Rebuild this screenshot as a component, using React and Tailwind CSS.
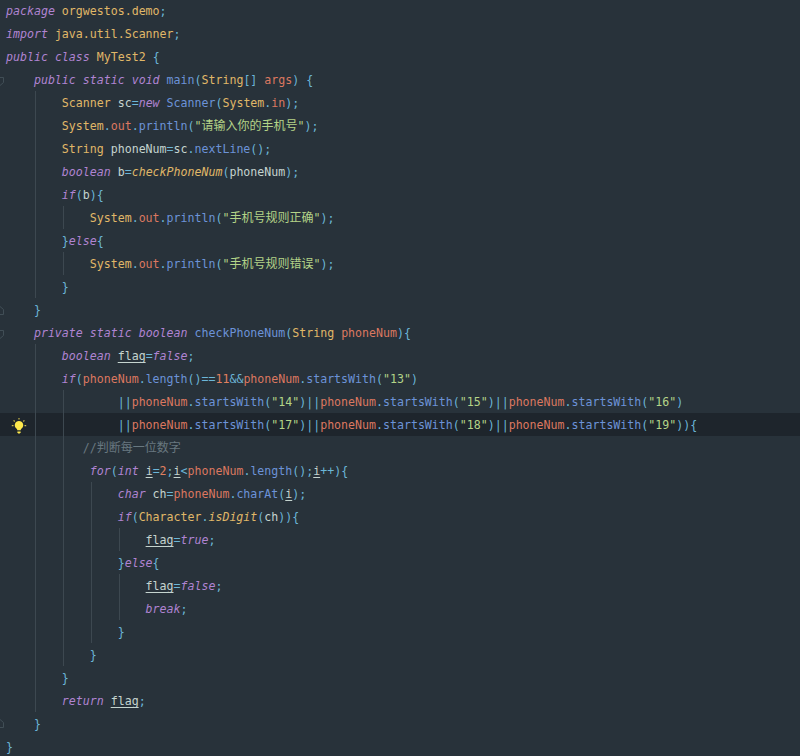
const fam = "font-['DejaVu_Sans_Mono','Noto_Sans_CJK_SC',monospace]";
const K = "italic text-[#b084d2]";
const Y = "text-[#e0b868]";
const W = "text-[#c5d4cf]";
const B = "text-[#6c93d8]";
const C = "text-[#6cb6d8]";
const R = "text-[#dc7860]";
const G = "text-[#b4d488]";
const N = "text-[#e08060]";
const I = "italic text-[#e0b868]";
const U = "text-[#c5d4cf] underline underline-offset-2";
const Z = "text-[#687880]";
const P = "text-[#dc7860]";

const ph = [P, "phoneNum"];
const sw = (n, close = ")") => [[B, "startsWith"], [C, "("], [G, `"${n}"`], [C, close]];

const lines = [
  [[K, "package"], [W, " "], [Y, "orgwestos.demo"], [C, ";"]],
  [[K, "import"], [W, " "], [Y, "java.util.Scanner"], [C, ";"]],
  [[K, "public"], [W, " "], [K, "class"], [W, " "], [Y, "MyTest2"], [W, " "], [C, "{"]],
  [[W, "    "], [K, "public"], [W, " "], [K, "static"], [W, " "], [K, "void"], [W, " "], [B, "main"], [C, "("], [Y, "String"], [C, "[]"], [W, " "], [R, "args"], [C, ")"], [W, " "], [C, "{"]],
  [[W, "        "], [Y, "Scanner"], [W, " sc"], [C, "="], [K, "new"], [W, " "], [B, "Scanner"], [C, "("], [Y, "System"], [C, "."], [R, "in"], [C, ");"]],
  [[W, "        "], [Y, "System"], [C, "."], [R, "out"], [C, "."], [B, "println"], [C, "("], [G, "\"请输入你的手机号\""], [C, ");"]],
  [[W, "        "], [Y, "String"], [W, " phoneNum"], [C, "="], [W, "sc"], [C, "."], [B, "nextLine"], [C, "();"]],
  [[W, "        "], [K, "boolean"], [W, " b"], [C, "="], [I, "checkPhoneNum"], [C, "("], [W, "phoneNum"], [C, ");"]],
  [[W, "        "], [K, "if"], [C, "("], [W, "b"], [C, "){"]],
  [[W, "            "], [Y, "System"], [C, "."], [R, "out"], [C, "."], [B, "println"], [C, "("], [G, "\"手机号规则正确\""], [C, ");"]],
  [[W, "        "], [C, "}"], [K, "else"], [C, "{"]],
  [[W, "            "], [Y, "System"], [C, "."], [R, "out"], [C, "."], [B, "println"], [C, "("], [G, "\"手机号规则错误\""], [C, ");"]],
  [[W, "        "], [C, "}"]],
  [[W, "    "], [C, "}"]],
  [[W, "    "], [K, "private"], [W, " "], [K, "static"], [W, " "], [K, "boolean"], [W, " "], [B, "checkPhoneNum"], [C, "("], [Y, "String"], [W, " "], [R, "phoneNum"], [C, "){"]],
  [[W, "        "], [K, "boolean"], [W, " "], [U, "flag"], [C, "="], [K, "false"], [C, ";"]],
  [[W, "        "], [K, "if"], [C, "("], ph, [C, "."], [B, "length"], [C, "()=="], [N, "11"], [C, "&&"], ph, [C, "."], ...sw(13)],
  [[W, "                "], [C, "||"], ph, [C, "."], ...sw(14), [C, "||"], ph, [C, "."], ...sw(15), [C, "||"], ph, [C, "."], ...sw(16)],
  [[W, "                "], [C, "||"], ph, [C, "."], ...sw(17), [C, "||"], ph, [C, "."], ...sw(18), [C, "||"], ph, [C, "."], ...sw(19, "))"), [C, "{"]],
  [[W, "           "], [Z, "//判断每一位数字"]],
  [[W, "            "], [K, "for"], [C, "("], [K, "int"], [W, " "], [U, "i"], [C, "="], [N, "2"], [C, ";"], [U, "i"], [C, "<"], ph, [C, "."], [B, "length"], [C, "();"], [U, "i"], [C, "++){"]],
  [[W, "                "], [K, "char"], [W, " ch"], [C, "="], ph, [C, "."], [B, "charAt"], [C, "("], [U, "i"], [C, ");"]],
  [[W, "                "], [K, "if"], [C, "("], [Y, "Character"], [C, "."], [I, "isDigit"], [C, "("], [W, "ch"], [C, ")){"]],
  [[W, "                    "], [U, "flag"], [C, "="], [K, "true"], [C, ";"]],
  [[W, "                "], [C, "}"], [K, "else"], [C, "{"]],
  [[W, "                    "], [U, "flag"], [C, "="], [K, "false"], [C, ";"]],
  [[W, "                    "], [K, "break"], [C, ";"]],
  [[W, "                "], [C, "}"]],
  [[W, "            "], [C, "}"]],
  [[W, "        "], [C, "}"]],
  [[W, "        "], [K, "return"], [W, " "], [U, "flag"], [C, ";"]],
  [[W, "    "], [C, "}"]],
  [[C, "}"]],
];

const inRange = (i, a, b) => i >= a && i <= b;
function hasGuide(level, i) {
  if (level === 1) return inRange(i, 4, 12) || inRange(i, 15, 30);
  if (level === 2) return i === 9 || i === 11 || inRange(i, 17, 28);
  if (level === 3) return inRange(i, 21, 27);
  if (level === 4) return i === 23 || i === 25 || i === 26;
  return false;
}

const folds = {
  3: "mt-[8px]",
  13: "mt-[7px] rotate-180",
  14: "mt-[8px]",
  31: "mt-[6px] rotate-180",
};

function Fold({ className }) {
  return (
    <svg className={`-ml-[4px] ${className}`} width="8" height="11" viewBox="0 0 8 11" fill="none" stroke="#414e56">
      <path d="M0.5 1.5H7.5V6.5L4 9.5L0.5 6.5Z" />
    </svg>
  );
}

function Bulb() {
  return (
    <svg className="ml-[11px] mt-[4px]" width="16" height="18" viewBox="0 0 16 18" fill="none">
      <path d="M8 4a4.2 4.2 0 0 0-2.6 7.5c.6.5.9 1 .9 1.8h3.4c0-.8.3-1.3.9-1.8A4.2 4.2 0 0 0 8 4Z" fill="#ffe94d" />
      <path d="M6.4 14.4h3.2v1.2l-.8 1h-1.6l-.8-1Z" fill="#ffe94d" />
      <path d="M8 1v1.6M2.6 3.4l1.1 1.1M13.4 3.4l-1.1 1.1M0.8 8.7h1.7M13.5 8.7h1.7" stroke="#c9b94a" strokeWidth="1.2" />
    </svg>
  );
}

function Run({ cls, text }) {
  const parts = text.split(/([\u4e00-\u9fff]+)/);
  return (
    <span className={cls}>
      {parts.map((p, i) =>
        i % 2 === 1 ? <span key={i} className="text-[12px]">{p}</span> : p
      )}
    </span>
  );
}

function Row({ line, index }) {
  const first = line[0];
  const indent = first[0] === W && /^ +$/.test(first[1]) ? first[1].length : 0;
  const tokens = indent ? line.slice(1) : line;
  const cellCount = Math.ceil(indent / 4);
  const cells = Array.from({ length: cellCount }, (_, k) => k);
  return (
    <div className={`flex h-[23px] leading-[23px] whitespace-pre ${index === 18 ? "bg-[#1e252c]" : ""}`}>
      <div className="w-[7px] shrink-0">
        {folds[index] && <Fold className={folds[index]} />}
        {index === 18 && <Bulb />}
      </div>
      {cells.map((k) => (
        <div
          key={k}
          className={`shrink-0 ${(k + 1) * 4 > indent ? "w-[20.95px]" : "w-[27.93px]"} ${hasGuide(k, index) ? "border-l border-[#3d4850]" : ""}`}
        />
      ))}
      <div className="-ml-px pt-px">
        {tokens.map(([cls, text], j) => (
          <Run key={j} cls={cls} text={text} />
        ))}
      </div>
    </div>
  );
}

export default function App() {
  return (
    <div className={`w-[800px] h-[756px] overflow-hidden bg-[#28323a] text-[11.6px] ${fam}`}>
      <div className="flex flex-col -mt-px">
        {lines.map((line, i) => (
          <Row key={i} line={line} index={i} />
        ))}
      </div>
    </div>
  );
}
